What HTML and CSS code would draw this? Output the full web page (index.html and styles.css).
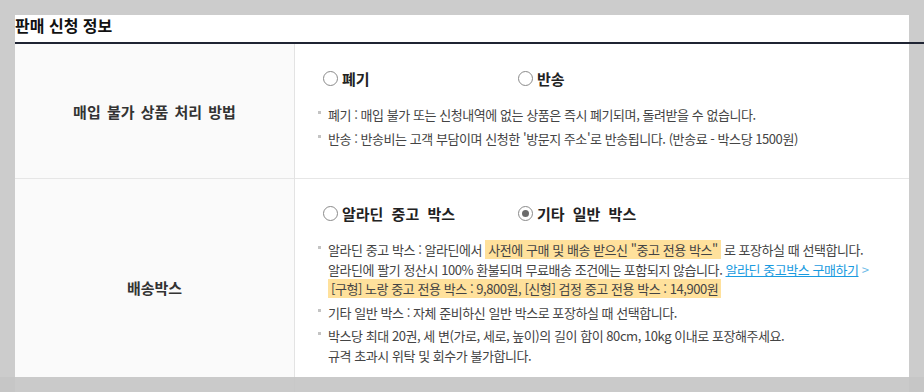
FILE: index.html
```html
<!DOCTYPE html>
<html lang="ko">
<head>
    <meta charset="UTF-8">
    <title>판매 신청 정보</title>
    <link rel="stylesheet" href="styles.css">
</head>
<body>
    <div class="panel">
        <h2 class="panel-title">판매 신청 정보</h2>
        <table class="info-table">
            <tr>
                <th>매입 불가 상품 처리 방법</th>
                <td>
                    <div class="radio-group">
                        <label class="radio"><span class="radio-mark"></span>폐기</label>
                        <label class="radio"><span class="radio-mark"></span>반송</label>
                    </div>
                    <ul class="notes">
                        <li>폐기 : 매입 불가 또는 신청내역에 없는 상품은 즉시 폐기되며, 돌려받을 수 없습니다.</li>
                        <li>반송 : 반송비는 고객 부담이며 신청한 '방문지 주소'로 반송됩니다. (반송료 - 박스당 1500원)</li>
                    </ul>
                </td>
            </tr>
            <tr>
                <th>배송박스</th>
                <td>
                    <div class="radio-group">
                        <label class="radio"><span class="radio-mark"></span>알라딘 중고 박스</label>
                        <label class="radio"><span class="radio-mark checked"></span>기타 일반 박스</label>
                    </div>
                    <ul class="notes">
                        <li>알라딘 중고 박스 : 알라딘에서 <span class="mark">사전에 구매 및 배송 받으신 "중고 전용 박스"</span> 로 포장하실 때 선택합니다.<br>
                            알라딘에 팔기 정산시 100% 환불되며 무료배송 조건에는 포함되지 않습니다. <a class="more-link" href="#">알라딘 중고박스 구매하기</a> <span class="arrow">&gt;</span><br>
                            <span class="mark">[구형] 노랑 중고 전용 박스 : 9,800원, [신형] 검정 중고 전용 박스 : 14,900원</span></li>
                        <li>기타 일반 박스 : 자체 준비하신 일반 박스로 포장하실 때 선택합니다.</li>
                        <li>박스당 최대 20권, 세 변(가로, 세로, 높이)의 길이 합이 80cm, 10kg 이내로 포장해주세요.<br>
                            규격 초과시 위탁 및 회수가 불가합니다.</li>
                    </ul>
                </td>
            </tr>
        </table>
    </div>
    <div class="bottom-shade"></div>
</body>
</html>
```

FILE: styles.css
```css
body {
    margin: 0;
    padding: 15px 15px 0;
    background-color: #cccccc;
    font-family: "Noto Sans CJK KR", "Noto Sans", sans-serif;
    color: #333;
    overflow: hidden;
    height: 392px;
    box-sizing: border-box;
}
.panel {
    background-color: #fff;
}
.panel-title {
    margin: 0 -15px 0 0;
    padding: 0 0 7px;
    font-size: 16px;
    line-height: 20px;
    font-weight: bold;
    color: #111;
    border-bottom: 2px solid #1f2433;
}
.info-table {
    width: 100%;
    border-collapse: collapse;
}
.info-table tr {
    border-bottom: 1px solid #e6e6e6;
}
.info-table th {
    width: 279px;
    background-color: #fafafa;
    border-right: 1px solid #e3e3e3;
    font-size: 15px;
    font-weight: bold;
    color: #333;
    word-spacing: 2px;
    padding: 0;
}
.info-table td {
    padding: 24px 20px 30px 23px;
    vertical-align: top;
}
.radio-group {
    display: flex;
    padding-left: 5px;
    height: 20px;
}
.radio {
    display: inline-flex;
    align-items: center;
    width: 195px;
    font-size: 15px;
    font-weight: bold;
    color: #222;
    word-spacing: 4px;
}
.radio-mark {
    width: 13px;
    height: 13px;
    border: 1px solid #8a8a8a;
    border-radius: 50%;
    background-color: #fff;
    margin-right: 4px;
    box-sizing: content-box;
    position: relative;
}
.radio-mark.checked::after {
    content: "";
    position: absolute;
    left: 3px;
    top: 3px;
    width: 7px;
    height: 7px;
    border-radius: 50%;
    background-color: #6b6b6b;
}
.notes {
    list-style: none;
    margin: 17px 0 0;
    padding: 0;
    font-size: 13px;
    line-height: 19.5px;
    color: #444;
    letter-spacing: -0.45px;
}
.notes li {
    position: relative;
    padding-left: 10px;
    margin-bottom: 4px;
}
.notes li:last-child {
    margin-bottom: 0;
}
.notes li::before {
    content: "";
    position: absolute;
    left: 0;
    top: 6px;
    width: 3px;
    height: 3px;
    background-color: #c4c4c4;
}
.mark {
    background-color: #ffe19c;
    padding: 0 3px;
}
.more-link {
    color: #1a9be0;
    text-decoration: underline;
}
.arrow {
    color: #6cbbe8;
}
.bottom-shade {
    position: absolute;
    left: 0;
    right: 0;
    top: 377px;
    height: 15px;
    background-color: rgba(198, 198, 198, 0.92);
}
```
